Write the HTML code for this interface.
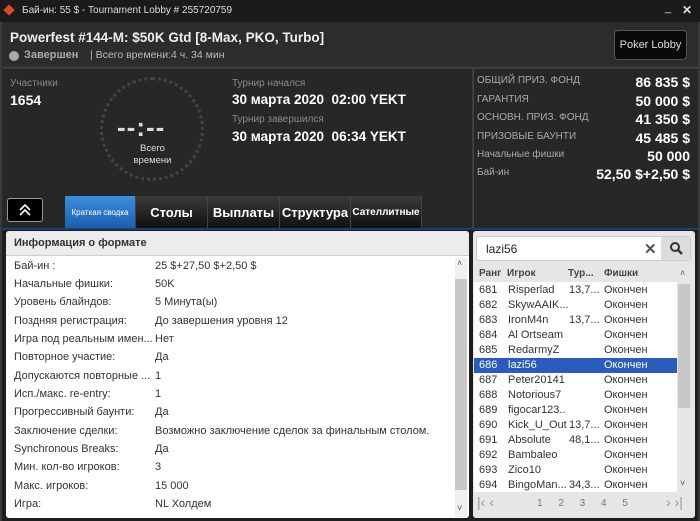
<!DOCTYPE html>
<html><head><meta charset="utf-8"><style>
*{margin:0;padding:0;box-sizing:border-box}
body{width:700px;height:521px;background:#3a3a3a;font-family:"Liberation Sans",sans-serif;position:relative;overflow:hidden}
.a{position:absolute;white-space:nowrap}
.lbl{color:#8a8a8a;font-size:10px}
.big{color:#fff;font-weight:bold;font-size:14px}
.r{color:#aaa;font-size:10px}
.rv{color:#fff;font-weight:bold;font-size:14px;text-align:right;right:10px}
.tab{position:absolute;top:196px;height:32px;background:linear-gradient(#3a3a3a,#111);color:#fff;font-weight:bold;font-size:13px;display:flex;align-items:center;justify-content:center;border-right:1px solid #444;white-space:nowrap}
.row{position:absolute;left:14px;font-size:11px;color:#333;height:18px;white-space:nowrap}
.row span{position:absolute;left:141px;white-space:nowrap}
.tr{position:absolute;left:474px;width:203px;height:15px;font-size:11px;color:#333;line-height:15px;white-space:nowrap}
.tr b{font-weight:normal;position:absolute}
</style></head><body>
<div class="a" style="left:0;top:0;width:700px;height:22px;background:#1b1b1b"></div>
<div class="a" style="left:5px;top:6px;width:8px;height:8px;background:#d9482b;transform:rotate(45deg)"></div>
<div class="a" style="left:22px;top:5px;color:#ddd;font-size:10px">Бай-ин: 55 $ - Tournament Lobby # 255720759</div>
<div class="a" style="left:665px;top:2px;color:#ddd;font-size:11px">_</div>
<div class="a" style="left:682px;top:3px;color:#ddd;font-size:12px;font-weight:bold">✕</div>
<div class="a" style="left:2px;top:22px;width:696px;height:46px;background:#2c2c2c;border-bottom:1px solid #444"></div>
<div class="a" style="left:10px;top:30px;color:#eee;font-weight:bold;font-size:13.5px">Powerfest #144-M: $50K Gtd [8-Max, PKO, Turbo]</div>
<div class="a" style="left:9px;top:51px;width:10px;height:10px;border-radius:50%;background:#aaa"></div>
<div class="a" style="left:24px;top:49px;color:#aaa;font-weight:bold;font-size:11px">Завершен</div>
<div class="a" style="left:90px;top:49px;color:#bbb;font-size:10.5px">| Всего времени:4 ч. 34 мин</div>
<div class="a" style="left:614px;top:30px;width:73px;height:30px;background:#0a0a0a;border:1px solid #555;border-radius:4px;color:#ddd;font-size:11px;text-align:center;line-height:28px">Poker Lobby</div>
<div class="a" style="left:2px;top:69px;width:470px;height:160px;background:#272727"></div>
<div class="a" style="left:473px;top:69px;width:225px;height:160px;background:#272727;border-left:1px solid #444"></div>
<div class="a lbl" style="left:10px;top:78px">Участники</div>
<div class="a big" style="left:10px;top:92px">1654</div>
<div class="a" style="left:100px;top:77px;width:104px;height:104px;border-radius:50%;border:3px dotted #444"></div>
<div class="a" style="left:117px;top:112px;color:#ddd;font-size:26px;font-weight:bold;letter-spacing:1px">--:--</div>
<div class="a" style="left:120px;top:143px;width:65px;text-align:center;color:#ddd;font-size:9.5px;line-height:12px">Всего<br>времени</div>
<div class="a lbl" style="left:232px;top:78px">Турнир начался</div>
<div class="a big" style="left:232px;top:92px;font-size:13.5px">30 марта 2020&nbsp; 02:00 YEKT</div>
<div class="a lbl" style="left:232px;top:114px">Турнир завершился</div>
<div class="a big" style="left:232px;top:129px;font-size:13.5px">30 марта 2020&nbsp; 06:34 YEKT</div>
<div class="a r" style="left:477px;top:75px">ОБЩИЙ ПРИЗ. ФОНД</div><div class="a rv" style="top:74px">86 835 $</div>
<div class="a r" style="left:477px;top:94px">ГАРАНТИЯ</div><div class="a rv" style="top:93px">50 000 $</div>
<div class="a r" style="left:477px;top:112px">ОСНОВН. ПРИЗ. ФОНД</div><div class="a rv" style="top:111px">41 350 $</div>
<div class="a r" style="left:477px;top:131px">ПРИЗОВЫЕ БАУНТИ</div><div class="a rv" style="top:130px">45 485 $</div>
<div class="a r" style="left:477px;top:149px">Начальные фишки</div><div class="a rv" style="top:148px">50 000</div>
<div class="a r" style="left:477px;top:167px">Бай-ин</div><div class="a rv" style="top:166px">52,50 $+2,50 $</div>
<div class="a" style="left:7px;top:198px;width:36px;height:24px;background:#000;border:1px solid #999;border-radius:3px"></div>
<svg class="a" style="left:17px;top:202px" width="16" height="16"><path d="M3 8l5-5 5 5M3 13l5-5 5 5" fill="none" stroke="#fff" stroke-width="1.6"/></svg>
<div class="tab" style="left:65px;width:71px;background:linear-gradient(#3b8fe0,#1c5fb0);font-size:8px;font-weight:normal">Краткая сводка</div>
<div class="tab" style="left:136px;width:72px">Столы</div>
<div class="tab" style="left:208px;width:72px">Выплаты</div>
<div class="tab" style="left:280px;width:71px">Структура</div>
<div class="tab" style="left:351px;width:71px;font-size:10px">Сателлитные</div>
<div class="a" style="left:2px;top:228px;width:696px;height:2px;background:#1d3f6a"></div>
<div class="a" style="left:2px;top:230px;width:696px;height:291px;background:#1e1e1e"></div>
<div class="a" style="left:6px;top:231px;width:463px;height:287px;background:#fff;border-radius:3px;overflow:hidden">
<div style="height:25px;background:#ececec;border-bottom:1px solid #ccc;color:#333;font-weight:bold;font-size:11px;padding:6px 8px">Информация о формате</div>
<div class="a" style="left:449px;top:27px;width:12px;height:259px;background:#f0f0f0"></div>
<div class="a" style="left:449px;top:48px;width:12px;height:211px;background:#c8c8c8"></div>
<div class="a" style="left:451px;top:27px;font-size:9px;color:#555">˄</div>
<div class="a" style="left:451px;top:272px;font-size:9px;color:#555">˅</div>
</div>
<div class="row" style="top:260px">Бай-ин :<span>25 $+27,50 $+2,50 $</span></div>
<div class="row" style="top:278px">Начальные фишки:<span>50K</span></div>
<div class="row" style="top:296px">Уровень блайндов:<span>5 Минута(ы)</span></div>
<div class="row" style="top:315px">Поздняя регистрация:<span>До завершения уровня 12</span></div>
<div class="row" style="top:333px">Игра под реальным имен...<span>Нет</span></div>
<div class="row" style="top:351px">Повторное участие:<span>Да</span></div>
<div class="row" style="top:370px">Допускаются повторные ...<span>1</span></div>
<div class="row" style="top:388px">Исп./макс. re-entry:<span>1</span></div>
<div class="row" style="top:406px">Прогрессивный баунти:<span>Да</span></div>
<div class="row" style="top:425px">Заключение сделки:<span>Возможно заключение сделок за финальным столом.</span></div>
<div class="row" style="top:443px">Synchronous Breaks:<span>Да</span></div>
<div class="row" style="top:461px">Мин. кол-во игроков:<span>3</span></div>
<div class="row" style="top:480px">Макс. игроков:<span>15 000</span></div>
<div class="row" style="top:498px">Игра:<span>NL Холдем</span></div>
<div class="a" style="left:473px;top:231px;width:222px;height:287px;background:#e6e6e6;border-radius:3px"></div>
<div class="a" style="left:476px;top:236px;width:215px;height:25px;background:#fff;border:1px solid #ccc;border-radius:3px"></div>
<div class="a" style="left:661px;top:237px;width:29px;height:23px;background:#ddd"></div>
<div class="a" style="left:486px;top:242px;font-size:12px;color:#222">lazi56</div>
<div class="a" style="left:644px;top:240px;font-size:15px;color:#555;font-weight:bold">✕</div>
<svg class="a" style="left:669px;top:241px" width="14" height="14"><circle cx="6" cy="6" r="4" fill="none" stroke="#333" stroke-width="2"/><path d="M9 9l4 4" stroke="#333" stroke-width="2.5"/></svg>
<div class="a" style="left:474px;top:266px;width:203px;height:16px;background:#e6e6e6;font-size:10px;font-weight:bold;color:#444;line-height:16px">
<b style="position:absolute;left:5px">Ранг</b><b style="position:absolute;left:33px">Игрок</b><b style="position:absolute;left:94px">Тур...</b><b style="position:absolute;left:130px">Фишки</b></div>
<div class="a" style="left:474px;top:282px;width:203px;height:210px;background:#fff"></div>
<div class="a" style="left:677px;top:266px;width:15px;height:226px;background:#e6e6e6"></div>
<div class="a" style="left:678px;top:284px;width:12px;height:124px;background:#c8c8c8"></div>
<div class="a" style="left:680px;top:268px;font-size:9px;color:#555">˄</div>
<div class="a" style="left:680px;top:478px;font-size:9px;color:#555">˅</div>
<div class="tr" style="top:283px"><b style="left:5px">681</b><b style="left:34px">Risperlad</b><b style="left:95px">13,7...</b><b style="left:130px">Окончен</b></div>
<div class="tr" style="top:298px"><b style="left:5px">682</b><b style="left:34px">SkywAAIK...</b><b style="left:130px">Окончен</b></div>
<div class="tr" style="top:313px"><b style="left:5px">683</b><b style="left:34px">IronM4n</b><b style="left:95px">13,7...</b><b style="left:130px">Окончен</b></div>
<div class="tr" style="top:328px"><b style="left:5px">684</b><b style="left:34px">Al Ortseam</b><b style="left:130px">Окончен</b></div>
<div class="tr" style="top:343px"><b style="left:5px">685</b><b style="left:34px">RedarmyZ</b><b style="left:130px">Окончен</b></div>
<div class="tr" style="top:358px;background:#2a5cbf;color:#fff"><b style="left:5px">686</b><b style="left:34px">lazi56</b><b style="left:130px">Окончен</b></div>
<div class="tr" style="top:373px"><b style="left:5px">687</b><b style="left:34px">Peter20141</b><b style="left:130px">Окончен</b></div>
<div class="tr" style="top:388px"><b style="left:5px">688</b><b style="left:34px">Notorious7</b><b style="left:130px">Окончен</b></div>
<div class="tr" style="top:403px"><b style="left:5px">689</b><b style="left:34px">figocar123..</b><b style="left:130px">Окончен</b></div>
<div class="tr" style="top:418px"><b style="left:5px">690</b><b style="left:34px">Kick_U_Out</b><b style="left:95px">13,7...</b><b style="left:130px">Окончен</b></div>
<div class="tr" style="top:433px"><b style="left:5px">691</b><b style="left:34px">Absolute</b><b style="left:95px">48,1...</b><b style="left:130px">Окончен</b></div>
<div class="tr" style="top:448px"><b style="left:5px">692</b><b style="left:34px">Bambaleo</b><b style="left:130px">Окончен</b></div>
<div class="tr" style="top:463px"><b style="left:5px">693</b><b style="left:34px">Zico10</b><b style="left:130px">Окончен</b></div>
<div class="tr" style="top:478px"><b style="left:5px">694</b><b style="left:34px">BingoMan...</b><b style="left:95px">34,3...</b><b style="left:130px">Окончен</b></div>
<div class="a" style="left:477px;top:494px;font-size:14px;color:#999">|‹ ‹</div>
<div class="a" style="left:537px;top:498px;font-size:10px;color:#777;word-spacing:13px">1 2 3 4 5</div>
<div class="a" style="left:666px;top:494px;font-size:14px;color:#999">› ›|</div>
</body></html>
